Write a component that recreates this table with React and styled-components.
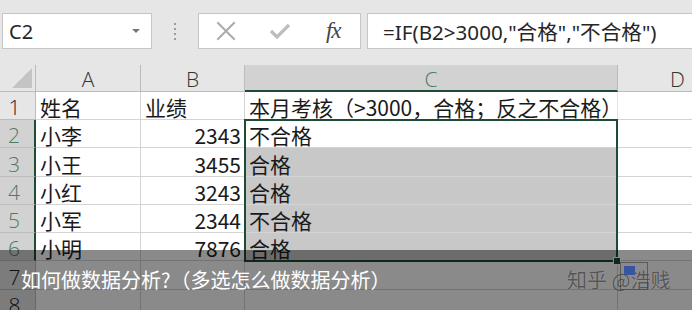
import React from 'react';
import styled, { createGlobalStyle } from 'styled-components';

const GlobalStyle = createGlobalStyle`
  html, body { margin: 0; padding: 0; background: #fff; }
  body { overflow: hidden; }
`;

const SANS = `"Noto Sans", "Noto Sans CJK SC", sans-serif`;
const CELL_FONT = `"Noto Sans CJK SC", "Noto Sans", sans-serif`;
const GREEN = '#1f4b35';
const GRID = '#d4d4d4';
const HEAD_LINE = '#bcbcbc';

const Screen = styled.div`
  position: relative;
  width: 692px;
  height: 310px;
  overflow: hidden;
  background: #e6e6e6;
  font-family: ${SANS};
`;

/* ---------- formula bar ---------- */
const Toolbar = styled.div`
  display: flex;
  align-items: flex-start;
  height: 65px;
  box-sizing: border-box;
  padding: 13px 0 0 2px;
`;

const Box = styled.div`
  height: 36px;
  box-sizing: border-box;
  background: #fff;
  border: 1px solid #c6c6c6;
  display: flex;
  align-items: center;
`;

const NameBox = styled(Box)`
  width: 150px;
  padding: 0 11px 0 6px;
  justify-content: space-between;
  font-size: 20px;
  color: #262626;
`;

const DropArrow = styled.span`
  width: 0;
  height: 0;
  border-left: 4px solid transparent;
  border-right: 4px solid transparent;
  border-top: 4px solid #777;
`;

const Grip = styled.div`
  width: 46px;
  height: 36px;
  display: flex;
  flex-direction: column;
  align-items: center;
  justify-content: center;
  gap: 3px;
`;

const GripDot = styled.span`
  width: 2px;
  height: 2px;
  background: #9a9a9a;
`;

const FxButtons = styled(Box)`
  width: 163px;
`;

const IconSlot = styled.div`
  width: 54px;
  height: 100%;
  display: flex;
  align-items: center;
  justify-content: center;
  color: ${(p) => p.$color};
`;

const FxLabel = styled.span`
  font-family: "Liberation Serif", "DejaVu Serif", serif;
  font-style: italic;
  font-size: 23px;
  color: #454545;
  letter-spacing: -1px;
`;

const FormulaInput = styled(Box)`
  flex: 1;
  margin-left: 6px;
  margin-right: -20px;
  padding-left: 15px;
  font-size: 20.6px;
  color: #262626;
  white-space: nowrap;
`;

/* ---------- sheet ---------- */
const Sheet = styled.div`
  position: relative;
  display: grid;
  grid-template-columns: 36px 105px 104px 373px 120px;
  grid-template-rows: 27px 28px 28px 29px 28px 28px 28px 29px 28px;
  font-family: ${CELL_FONT};
  font-size: 21px;
  color: #1a1a1a;
`;

const Cell = styled.div`
  box-sizing: border-box;
  display: flex;
  align-items: flex-end;
  justify-content: ${(p) => (p.$right ? 'flex-end' : 'flex-start')};
  padding: 0 3px 1px 4px;
  line-height: 21px;
  white-space: nowrap;
  overflow: visible;
  background: ${(p) => (p.$selected ? '#c8c8c8' : '#fff')};
  border-bottom: 1px solid ${GRID};
  border-right: 1px solid ${(p) => (p.$spill ? 'transparent' : GRID)};
  position: ${(p) => (p.$spill ? 'relative' : 'static')};
  z-index: ${(p) => (p.$spill ? 1 : 'auto')};
  background-clip: padding-box;
`;

const Corner = styled.div`
  position: relative;
  background: #e6e6e6;
  border-right: 1px solid ${HEAD_LINE};
  border-bottom: 1px solid ${HEAD_LINE};
  box-sizing: border-box;
  &::after {
    content: '';
    position: absolute;
    right: 3px;
    bottom: 3px;
    width: 0;
    height: 0;
    border-left: 20px solid transparent;
    border-bottom: 20px solid #c4c4c4;
  }
`;

const ColHead = styled.div`
  box-sizing: border-box;
  display: flex;
  align-items: center;
  justify-content: center;
  padding-top: 2px;
  font-family: "Open Sans", "Noto Sans", sans-serif;
  font-weight: 300;
  font-size: 21px;
  background: ${(p) => (p.$selected ? '#d2d2d2' : '#e6e6e6')};
  color: ${(p) => (p.$selected ? '#4e7a62' : '#333')};
  border-right: 1px solid ${HEAD_LINE};
  border-bottom: ${(p) => (p.$selected ? `2px solid ${GREEN}` : `1px solid ${HEAD_LINE}`)};
`;

const RowHead = styled.div`
  box-sizing: border-box;
  display: flex;
  align-items: flex-end;
  justify-content: center;
  padding: 0 6px 1px 0;
  line-height: 21px;
  font-family: "Open Sans", "Noto Sans", sans-serif;
  font-weight: 300;
  font-size: 21px;
  background: ${(p) => (p.$selected ? '#d2d2d2' : '#e6e6e6')};
  color: ${(p) => (p.$selected ? '#4e7a62' : '#222')};
  border-bottom: 1px solid ${HEAD_LINE};
  border-right: ${(p) => (p.$selected ? `2px solid ${GREEN}` : `1px solid ${HEAD_LINE}`)};
`;

/* frame of the selected range C2:C6 */
const SelectionFrame = styled.div`
  position: absolute;
  left: 244px;
  top: 54px;
  width: 374px;
  height: 143px;
  box-sizing: border-box;
  border: 2px solid ${GREEN};
  pointer-events: none;
  z-index: 2;
`;

const FillHandle = styled.span`
  position: absolute;
  right: -5px;
  bottom: -5px;
  width: 6px;
  height: 6px;
  background: ${GREEN};
  border: 1px solid #fff;
`;

/* ---------- caption strip ---------- */
const Caption = styled.div`
  position: absolute;
  left: 0;
  right: 0;
  top: 250px;
  bottom: 0;
  background: rgba(0, 0, 0, 0.46);
  z-index: 3;
  display: flex;
  align-items: flex-start;
  padding: 20px 0 0 21px;
  box-sizing: border-box;
`;

const CaptionText = styled.div`
  font-family: "Noto Sans CJK SC", sans-serif;
  font-size: 20px;
  line-height: 20px;
  color: #fff;
`;

const Watermark = styled.div`
  position: absolute;
  left: 567px;
  top: 270px;
  z-index: 4;
  display: flex;
  align-items: center;
  font-family: "Noto Sans CJK SC", sans-serif;
  font-size: 20px;
  line-height: 20px;
  color: rgba(70, 70, 70, 0.85);
  text-shadow: 0 0 1px rgba(200, 200, 200, 0.6);
`;

const Avatar = styled.span`
  position: absolute;
  left: 53px;
  top: -8px;
  width: 28px;
  height: 28px;
  border: 1px solid rgba(60, 60, 60, 0.6);
  box-sizing: border-box;
  &::before {
    content: '';
    position: absolute;
    left: 3px;
    top: 3px;
    width: 11px;
    height: 9px;
    background: #3a55a0;
  }
`;

const header = ['A', 'B', 'C', 'D'];
const rows = [
  ['姓名', '业绩', '本月考核（>3000，合格；反之不合格）'],
  ['小李', 2343, '不合格'],
  ['小王', 3455, '合格'],
  ['小红', 3243, '合格'],
  ['小军', 2344, '不合格'],
  ['小明', 7876, '合格'],
  ['', '', ''],
  ['', '', ''],
];

function XIcon() {
  return (
    <svg width="22" height="22" viewBox="0 0 22 22" fill="none" stroke="currentColor" strokeWidth="2" strokeLinecap="square">
      <path d="M3 3L19 19M19 3L3 19" />
    </svg>
  );
}

function CheckIcon() {
  return (
    <svg width="22" height="18" viewBox="0 0 22 18" fill="none" stroke="currentColor" strokeWidth="3.2" strokeLinejoin="miter">
      <path d="M2 9L8 15L20 3" />
    </svg>
  );
}

export default function App() {
  return (
    <Screen>
      <GlobalStyle />
      <Toolbar>
        <NameBox>
          <span>C2</span>
          <DropArrow />
        </NameBox>
        <Grip>
          <GripDot />
          <GripDot />
          <GripDot />
          <GripDot />
        </Grip>
        <FxButtons>
          <IconSlot $color="#ababab">
            <XIcon />
          </IconSlot>
          <IconSlot $color="#bdbdbd">
            <CheckIcon />
          </IconSlot>
          <IconSlot>
            <FxLabel>fx</FxLabel>
          </IconSlot>
        </FxButtons>
        <FormulaInput>=IF(B2&gt;3000,"合格","不合格")</FormulaInput>
      </Toolbar>

      <Sheet>
        <Corner />
        {header.map((h) => (
          <ColHead key={h} $selected={h === 'C'}>
            {h}
          </ColHead>
        ))}
        {rows.map((r, i) => {
          const n = i + 1;
          const inRange = n >= 2 && n <= 6;
          return (
            <React.Fragment key={n}>
              <RowHead $selected={inRange}>{n}</RowHead>
              <Cell>{r[0]}</Cell>
              <Cell $right={typeof r[1] === 'number'}>{r[1]}</Cell>
              <Cell $selected={inRange && n !== 2} $spill={n === 1}>
                {r[2]}
              </Cell>
              <Cell />
            </React.Fragment>
          );
        })}
        <SelectionFrame>
          <FillHandle />
        </SelectionFrame>
      </Sheet>

      <Caption>
        <CaptionText>如何做数据分析?（多选怎么做数据分析）</CaptionText>
      </Caption>
      <Watermark>
        知乎 @浩贱
        <Avatar />
      </Watermark>
    </Screen>
  );
}
